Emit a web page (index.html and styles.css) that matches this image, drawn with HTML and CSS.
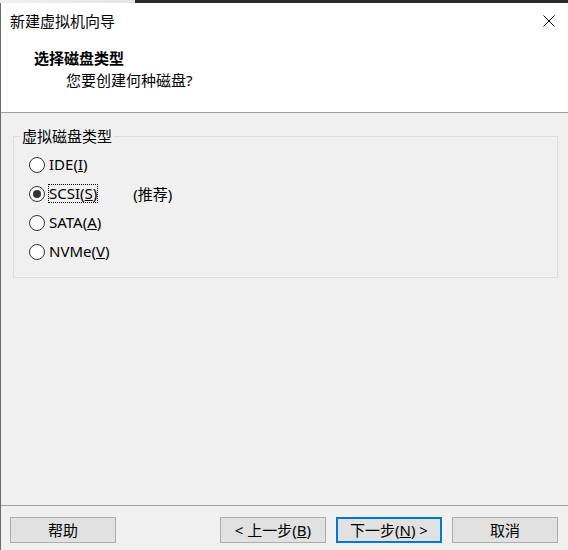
FILE: index.html
```html
<!DOCTYPE html>
<html>
<head>
 <title>新建虚拟机向导</title>
 <link rel="stylesheet" href="styles.css">
</head>
<body>
 <!-- strip of the window behind the dialog -->
 <div class="top-strip">
  <div class="strip-light"></div>
  <div class="strip-dark"></div>
 </div>

 <!-- the wizard dialog -->
 <div class="wizard">
  <div class="wizard-head">
   <div class="title-bar">
    <span class="title-text">新建虚拟机向导</span>
    <span class="close-button">
     <svg width="12" height="12" viewBox="0 0 12 12">
      <path d="M0.5 0.5 L11.5 11.5 M11.5 0.5 L0.5 11.5" stroke="#000" stroke-width="1" fill="none"/>
     </svg>
    </span>
   </div>
   <div class="page-header">
    <div class="page-title">选择磁盘类型</div>
    <div class="page-subtitle">您要创建何种磁盘?</div>
   </div>
  </div>

  <div class="wizard-body">
   <fieldset class="group-box">
    <legend class="group-title">虚拟磁盘类型</legend>
    <div class="radio-row">
     <span class="radio"></span>
     <span class="radio-label">IDE(<u>I</u>)</span>
    </div>
    <div class="radio-row">
     <span class="radio checked"></span>
     <span class="radio-label focused">SCSI(<u>S</u>)</span>
     <span class="radio-note">(推荐)</span>
    </div>
    <div class="radio-row">
     <span class="radio"></span>
     <span class="radio-label">SATA(<u>A</u>)</span>
    </div>
    <div class="radio-row">
     <span class="radio"></span>
     <span class="radio-label">NVMe(<u>V</u>)</span>
    </div>
   </fieldset>
  </div>

  <!-- buttons at the bottom of the wizard -->
  <div class="wizard-footer">
   <button class="wizard-button">帮助</button>
   <div class="footer-spacer"></div>
   <button class="wizard-button">&lt; 上一步(<u>B</u>)</button>
   <button class="wizard-button default">下一步(<u>N</u>) &gt;</button>
   <button class="wizard-button">取消</button>
  </div>
 </div>
</body>
</html>
```

FILE: styles.css
```css
/* page basics */
html, body {
 margin: 0;
 padding: 0;
}
body {
 width: 568px;
 height: 550px;
 overflow: hidden;
 background-color: #f0f0f0;
 font-family: "Noto Sans", "Noto Sans CJK SC", sans-serif;
 font-size: 15px;
 color: #000;
}

/* the strip of the window behind */
.top-strip {
 display: flex;
 height: 3px;
}
.strip-light {
 width: 135px;
 background: linear-gradient(to right, #f2f2f2, #e4e4e4);
}
.strip-dark {
 flex: 1;
 background-color: #2b2b2b;
}

/* dialog frame */
.wizard {
 display: flex;
 flex-direction: column;
 height: 547px;
 border-left: 1px solid #6b6b6b;
}

/* white header part */
.wizard-head {
 background-color: #fff;
 border-bottom: 1px solid #a0a0a0;
 height: 109px;
}
.title-bar {
 display: flex;
 align-items: center;
 justify-content: space-between;
 height: 36px;
 padding: 0 13px 0 9px;
}
.title-text {
 line-height: 20px;
}
.close-button {
 display: flex;
 width: 12px;
 height: 12px;
}
.page-header {
 padding-top: 9px;
}
.page-title {
 padding-left: 33px;
 line-height: 20px;
 font-weight: bold;
}
.page-subtitle {
 margin-top: 2px;
 padding-left: 65px;
 line-height: 20px;
}

/* grey body with the group box */
.wizard-body {
 flex: 1;
 padding-top: 15px;
}
.group-box {
 margin: 0 10px 0 12px;
 padding: 6px 0 0 15px;
 height: 150px;
 box-sizing: border-box;
 border: 1px solid #dcdcdc;
 min-width: 0;
}
.group-title {
 margin-left: -9px;
 padding: 0 2px;
 line-height: 16px;
}
.radio-row {
 display: flex;
 align-items: center;
 height: 29px;
}
.radio {
 width: 14px;
 height: 14px;
 border: 1px solid #333;
 border-radius: 50%;
 background-color: #fff;
 display: flex;
 align-items: center;
 justify-content: center;
 flex-shrink: 0;
}
.radio.checked::after {
 content: "";
 width: 8px;
 height: 8px;
 border-radius: 50%;
 background-color: #333;
}
.radio-label {
 margin-left: 3px;
 line-height: 17px;
 border: 1px dotted transparent;
}
.radio-label.focused {
 border-color: #000;
}
.radio-note {
 margin-left: 35px;
}

/* bottom button bar */
.wizard-footer {
 display: flex;
 align-items: flex-start;
 height: 45px;
 box-sizing: border-box;
 border-top: 1px solid #a0a0a0;
 padding: 11px 10px 0 9px;
 gap: 10px;
}
.footer-spacer {
 flex: 1;
}
.wizard-button {
 width: 106px;
 height: 26px;
 margin: 0;
 padding: 0;
 border: 1px solid #adadad;
 background-color: #e1e1e1;
 font-family: inherit;
 font-size: 15px;
 color: #000;
 line-height: 22px;
}
.wizard-button.default {
 border: 2px solid #0078d7;
}
```
